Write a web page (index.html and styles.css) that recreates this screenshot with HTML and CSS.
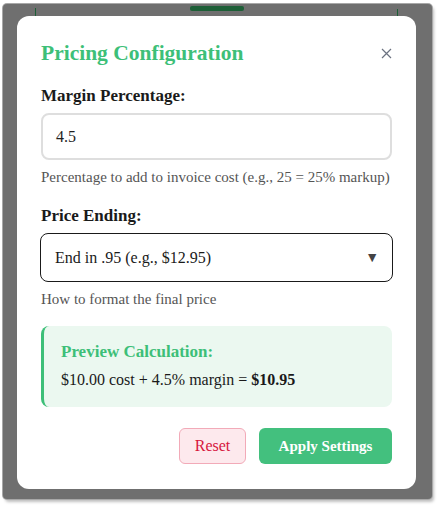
FILE: index.html
```html
<!DOCTYPE html>
<html>
<head>
<meta charset="utf-8">
<link rel="stylesheet" href="styles.css">
</head>
<body>
<div class="frame">
  <span class="mark mark-bar"></span>
  <span class="mark mark-left"></span>
  <span class="mark mark-right"></span>
  <div class="modal">
    <div class="header">
      <h2 class="title">Pricing Configuration</h2>
      <svg class="close" width="11" height="11" viewBox="0 0 11 11"><path d="M1 1L10 10M10 1L1 10" stroke="#6b7280" stroke-width="1.2" fill="none"/></svg>
    </div>
    <div class="field field-first">
      <label class="label">Margin Percentage:</label>
      <div class="input">4.5</div>
      <div class="help">Percentage to add to invoice cost (e.g., 25 = 25% markup)</div>
    </div>
    <div class="field field-next">
      <label class="label">Price Ending:</label>
      <div class="select"><span>End in .95 (e.g., $12.95)</span><span class="arrow">▼</span></div>
      <div class="help">How to format the final price</div>
    </div>
    <div class="preview">
      <div class="preview-title">Preview Calculation:</div>
      <div class="preview-text">$10.00 cost + 4.5% margin = <b>$10.95</b></div>
    </div>
    <div class="actions">
      <button class="btn btn-reset">Reset</button>
      <button class="btn btn-apply">Apply Settings</button>
    </div>
  </div>
</div>
</body>
</html>
```
FILE: styles.css
```css
html, body { margin: 0; padding: 0; background: #ffffff; }
body { font-family: "Liberation Serif", "DejaVu Serif", serif; color: #1f1f1f; }
.frame {
  position: relative;
  margin: 4px 10px 16px 3px;
  width: 399px;
  padding: 12px 16px 10px 14px;
  background: #6f6f6f;
  border-radius: 4px;
  box-shadow: 0 0 0 1px #a8a8a8, 2px 3px 3px rgba(0,0,0,0.25);
}
.mark { position: absolute; background: #1d5f37; }
.mark-bar { left: 187px; top: 2px; width: 54px; height: 5px; border-radius: 2px; }
.mark-left { left: 32px; top: 4px; width: 1px; height: 8px; }
.mark-right { left: 394px; top: 5px; width: 1px; height: 7px; }
.modal {
  background: #ffffff;
  border-radius: 12px;
  padding: 24px 24px 25px 24px;
  display: flex;
  flex-direction: column;
}
.header { display: flex; justify-content: space-between; align-items: center; height: 26px; }
.title { margin: 0; font-size: 21.5px; font-weight: bold; color: #3dbf78; line-height: 26px; }
.close { margin-right: 0; }
.field { display: flex; flex-direction: column; }
.field-first { margin-top: 20px; }
.field-next { margin-top: 20px; }
.label { font-size: 17px; font-weight: bold; color: #1a1a1a; line-height: 20px; }
.input {
  margin-top: 7px;
  height: 43px;
  border: 2px solid #dedede;
  border-radius: 8px;
  padding: 0 13px;
  display: flex; align-items: center;
  font-size: 16px; color: #1f1f1f;
}
.help { margin-top: 8px; font-size: 15px; color: #555555; line-height: 18px; }
.select {
  margin: 7px -1px 0 -1px;
  height: 47px;
  border: 1.5px solid #1a1a1a;
  border-radius: 8px;
  padding: 0 13px 0 14px;
  display: flex; align-items: center; justify-content: space-between;
  font-size: 16px; color: #1a1a1a;
}
.arrow { font-size: 14px; color: #444444; }
.preview {
  margin-top: 18px;
  background: #ebf8f0;
  border-left: 3px solid #3dbf78;
  border-radius: 8px;
  padding: 16px 18px 15px 17px;
  height: 50px;
}
.preview-title { font-size: 17px; font-weight: bold; color: #3dbf78; line-height: 20px; }
.preview-text { margin-top: 8px; font-size: 16px; color: #1a1a1a; line-height: 20px; }
.preview-text b { font-weight: bold; }
.actions { margin-top: 21px; display: flex; justify-content: flex-end; gap: 13px; }
.btn {
  font-family: "Liberation Serif", "DejaVu Serif", serif;
  font-size: 15px; height: 36px; border-radius: 6px; cursor: pointer;
}
.btn-reset { width: 67px; background: #fde9ed; border: 1px solid #f2aab8; color: #d7163e; font-size: 16px; }
.btn-apply { width: 133px; background: #43c07e; border: none; color: #ffffff; font-weight: bold; }
```
